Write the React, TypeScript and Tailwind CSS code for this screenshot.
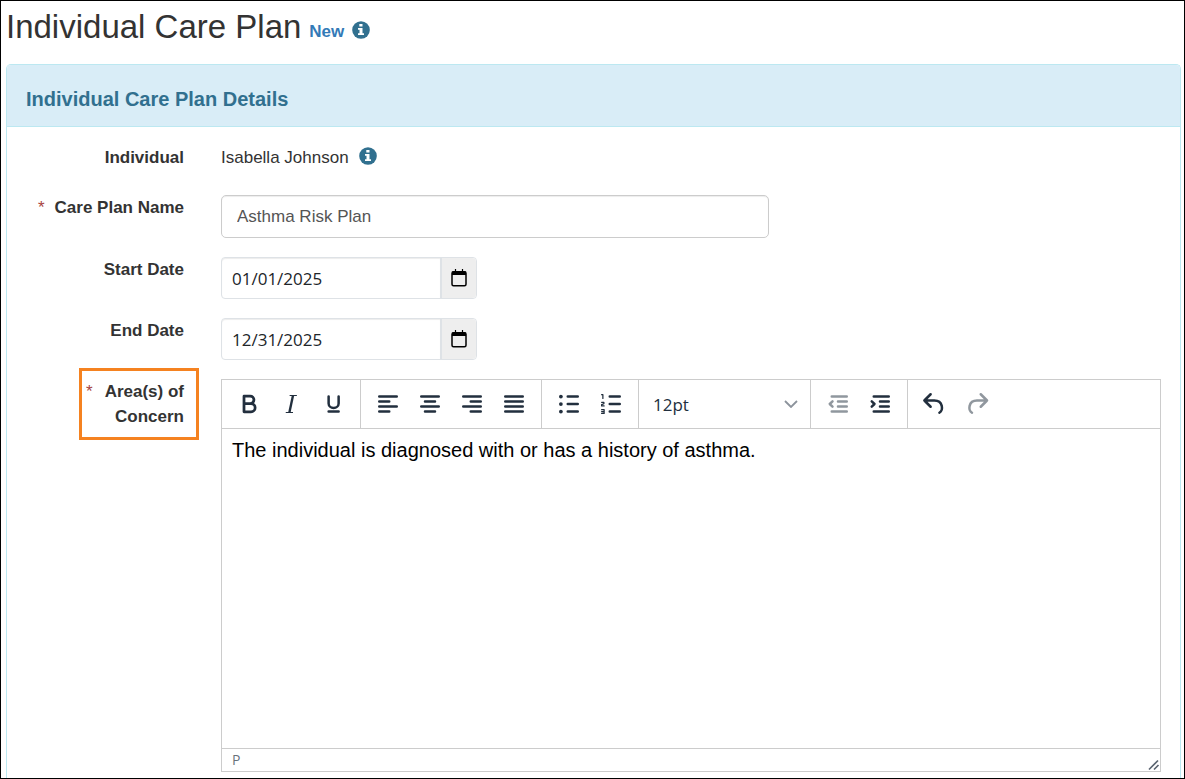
import React from "react";

type IconProps = { children: React.ReactNode };

function Icon({ children }: IconProps) {
  return (
    <svg
      viewBox="0 0 24 24"
      className="size-[30px]"
      fill="none"
      stroke="currentColor"
      strokeWidth="2"
      strokeLinecap="round"
      strokeLinejoin="round"
      aria-hidden="true"
    >
      {children}
    </svg>
  );
}

type ToolProps = {
  label: string;
  disabled?: boolean;
  children: React.ReactNode;
};

function Tool({ label, disabled, children }: ToolProps) {
  return (
    <button
      type="button"
      aria-label={label}
      disabled={disabled}
      className="flex h-12 w-[42px] items-center justify-center text-[#222f3e] disabled:text-[#222f3e]/50"
    >
      <Icon>{children}</Icon>
    </button>
  );
}

function ToolGroup({ children }: { children: React.ReactNode }) {
  return (
    <div className="flex border-r border-[#ccc] px-1.5 last:border-r-0">
      {children}
    </div>
  );
}

function Toolbar() {
  return (
    <div className="flex border-b border-[#ccc]">
      <ToolGroup>
        <Tool label="Bold">
          <path
            strokeWidth="2.2"
            d="M8 5.700h5a2.900 2.900 0 0 1 0 5.900H8M8 11.600h5.600a3.300 3.300 0 0 1 0 6.600H8V5.700"
          />
        </Tool>
        <Tool label="Italic">
          <path strokeWidth="1.9" strokeLinecap="butt" d="M13.6 5.2l-2.9 13.6" />
          <path
            strokeWidth="0.9"
            strokeLinecap="butt"
            d="M10.9 5.2h5.8M7.8 18.8h5.8"
          />
        </Tool>
        <Tool label="Underline">
          <path d="M8.500 6v5.500a4 3.600 0 0 0 8 0V6M8.500 18h8" />
        </Tool>
      </ToolGroup>
      <ToolGroup>
        <Tool label="Align left">
          <path d="M5 6h14M5 10h8M5 14h14M5 18h8" />
        </Tool>
        <Tool label="Align center">
          <path d="M5 6h14M8 10h8M5 14h14M8 18h8" />
        </Tool>
        <Tool label="Align right">
          <path d="M5 6h14M11 10h8M5 14h14M11 18h8" />
        </Tool>
        <Tool label="Justify">
          <path d="M5 6h14M5 10h14M5 14h14M5 18h14" />
        </Tool>
      </ToolGroup>
      <ToolGroup>
        <Tool label="Bullet list">
          <path d="M11 6h8M11 12h8M11 18h8" />
          <g fill="currentColor" stroke="none">
            <circle cx="5.5" cy="6" r="1.5" />
            <circle cx="5.5" cy="12" r="1.5" />
            <circle cx="5.5" cy="18" r="1.5" />
          </g>
        </Tool>
        <Tool label="Numbered list">
          <path d="M11 6h8M11 12h8M11 18h8" />
          <path
            strokeWidth="1"
            d="M4.5 4.5h1v3M4.5 10.6H6.3v1.2l-1.8.7v1h2M4.5 16.5h2v3h-2M4.5 18h2"
          />
        </Tool>
      </ToolGroup>
      <div className="relative w-[172px] border-r border-[#ccc]">
        <select
          aria-label="Font size"
          defaultValue="12pt"
          className="h-12 w-full appearance-none bg-transparent pl-3.5 font-['Open_Sans','Noto_Sans',sans-serif] text-[17px] text-[#222f3e]"
        >
          <option>10pt</option>
          <option>12pt</option>
          <option>14pt</option>
        </select>
        <svg
          viewBox="0 0 14 8"
          className="pointer-events-none absolute top-5 right-3 h-2 w-3.5"
          fill="none"
          stroke="#8c939c"
          strokeWidth="1.8"
          aria-hidden="true"
        >
          <path d="M1 1l6 6 6-6" />
        </svg>
      </div>
      <ToolGroup>
        <Tool label="Decrease indent" disabled>
          <path d="M7 6h12M12 10h7M12 14h7M7 18h12M7.6 9.9L5.4 12l2.2 2.1" />
        </Tool>
        <Tool label="Increase indent">
          <path d="M7 6h12M12 10h7M12 14h7M7 18h12M5.4 9.9L7.6 12l-2.2 2.1" />
        </Tool>
      </ToolGroup>
      <ToolGroup>
        <Tool label="Undo">
          <path d="M8.500 4.200L3.500 9.200l5 5M3.500 9.200h8c3.200 0 5.300 1.700 5.900 4.300.5 2.300-.3 4.600-1.900 5.500" />
        </Tool>
        <Tool label="Redo" disabled>
          <path d="M15 4.200l5 5-5 5M20 9.200h-8c-3.200 0-5.300 1.700-5.900 4.300-.5 2.300.3 4.600 1.900 5.500" />
        </Tool>
      </ToolGroup>
    </div>
  );
}

type RowProps = {
  label: string;
  htmlFor?: string;
  required?: boolean;
  highlight?: boolean;
  children: React.ReactNode;
};

function FormRow({ label, htmlFor, required, highlight, children }: RowProps) {
  return (
    <div className="grid grid-cols-[158px_1fr] gap-x-[37px]">
      <div className="relative flex justify-end">
        {highlight && (
          <div className="pointer-events-none absolute -top-[11px] -right-[15px] h-[72px] w-[120px] border-3 border-[#f58220]" />
        )}
        <label
          htmlFor={htmlFor}
          className={
            "flex items-start text-right font-bold " +
            (highlight ? "w-[98px] justify-between" : "gap-2.5")
          }
        >
          {required && <span className="font-normal text-[#a94442]">*</span>}
          <span>{label}</span>
        </label>
      </div>
      <div className="min-w-0">{children}</div>
    </div>
  );
}

function DateField({ id, value }: { id: string; value: string }) {
  return (
    <div className="flex h-[42px] w-64 rounded-[4px] border border-[#dee2e6]">
      <input
        id={id}
        type="text"
        defaultValue={value}
        className="min-w-0 flex-1 rounded-l-[4px] px-2.5 font-['Open_Sans','Noto_Sans',sans-serif] text-[17px] text-[#212529] shadow-[inset_0_1px_1px_rgba(0,0,0,0.075)]"
      />
      <button
        type="button"
        aria-label="Choose date"
        className="flex w-9 items-center justify-center rounded-r-[4px] border-l-2 border-[#dee2e6] bg-[#eee]"
      >
        <svg viewBox="0 0 16 18" className="h-[18px] w-4" aria-hidden="true">
          <path d="M4.5 0v3M11.5 0v3" stroke="#000" strokeWidth="1.2" />
          <rect
            x="1"
            y="2.75"
            width="14"
            height="14"
            rx="1.5"
            fill="none"
            stroke="#000"
            strokeWidth="1.5"
          />
          <path d="M1 2.500h14v3.500H1z" />
        </svg>
      </button>
    </div>
  );
}

function InfoButton({ label }: { label: string }) {
  return (
    <button type="button" aria-label={label} className="text-[#31708f]">
      <svg viewBox="0 0 18 18" className="size-[18px]" aria-hidden="true">
        <circle cx="9" cy="9" r="8.8" fill="currentColor" />
        <path
          fill="#fff"
          d="M7.300 3h3.200v2.500H7.300zM6 7h4.500v5.200H12V14H6v-1.800h1.500V8.700H6z"
        />
      </svg>
    </button>
  );
}

export default function App() {
  return (
    <div className="flex min-h-screen flex-col border border-black bg-white px-[5px] font-['Liberation_Sans',Arial,sans-serif] text-[17px] leading-[25px] text-[#333]">
      <header className="flex h-[63px] items-start pr-3">
        <h1 className="text-[33px] leading-[52px]">Individual Care Plan</h1>
        <div className="ml-2 flex gap-2 pt-[18px]">
          <span className="text-[17px] leading-[26px] font-bold text-[#337ab7]">
            New
          </span>
          <span className="flex h-[22px] items-center">
            <InfoButton label="About this form" />
          </span>
        </div>
      </header>

      <section className="mr-[-2px] flex-1 rounded-t-[5px] border border-b-0 border-[#bce8f1]">
        <div className="rounded-t-[4px] border-b border-[#bce8f1] bg-[#d9edf7] px-[19px] pt-[22px] pb-3.5">
          <h2 className="text-xl leading-[25px] font-bold text-[#31708f]">
            Individual Care Plan Details
          </h2>
        </div>

        <form className="flex flex-col gap-[19px] px-[19px] pt-[18px] pb-1.5">
          <FormRow label="Individual">
            <div className="flex h-[31px] items-start gap-2.5">
              <span>Isabella Johnson</span>
              <span className="flex h-[22px] items-center">
                <InfoButton label="About this individual" />
              </span>
            </div>
          </FormRow>

          <FormRow label="Care Plan Name" htmlFor="plan-name" required>
            <input
              id="plan-name"
              type="text"
              defaultValue="Asthma Risk Plan"
              className="block h-[43px] w-7/12 rounded-[5px] border border-[#ccc] px-[15px] text-[#555] shadow-[inset_0_1px_1px_rgba(0,0,0,0.075)]"
            />
          </FormRow>

          <FormRow label="Start Date" htmlFor="start-date">
            <DateField id="start-date" value="01/01/2025" />
          </FormRow>

          <FormRow label="End Date" htmlFor="end-date">
            <DateField id="end-date" value="12/31/2025" />
          </FormRow>

          <FormRow
            label="Area(s) of Concern"
            htmlFor="concern"
            required
            highlight
          >
            <div className="border border-[#ccc]">
              <Toolbar />
              <textarea
                id="concern"
                defaultValue="The individual is diagnosed with or has a history of asthma."
                className="block h-[319px] w-full resize-none px-2.5 py-2 text-xl leading-[26px] text-black"
              />
              <div className="flex h-[23px] items-center justify-between border-t border-[#ccc] pl-2.5 font-['Open_Sans','Noto_Sans',sans-serif] text-sm leading-5 text-[#222f3e]/70">
                <span>P</span>
                <svg
                  viewBox="0 0 12 12"
                  className="size-3 self-end"
                  stroke="#5a6470"
                  strokeWidth="1.7"
                  aria-hidden="true"
                >
                  <path d="M1 10.5L10 1.5M6 10.5L10.5 6" />
                </svg>
              </div>
            </div>
          </FormRow>
        </form>
      </section>
    </div>
  );
}
